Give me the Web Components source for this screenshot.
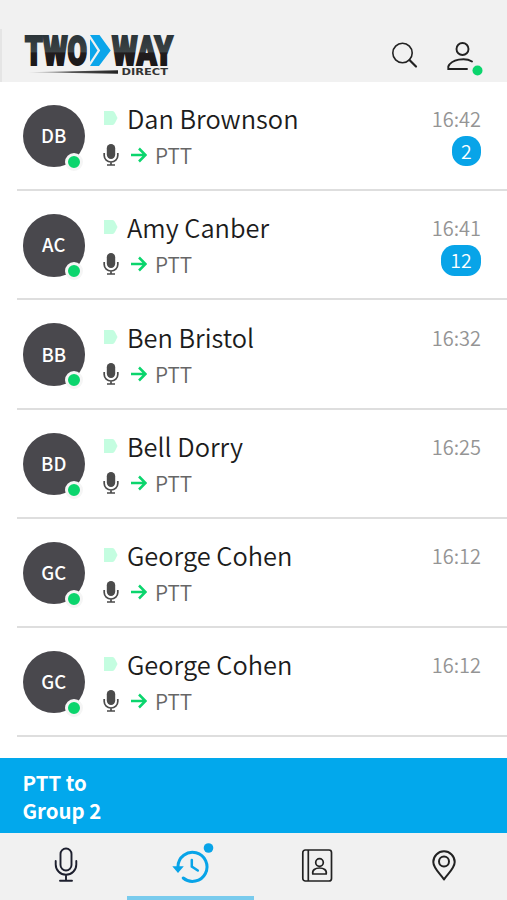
<!DOCTYPE html>
<html lang="en">
<head>
<meta charset="utf-8">
<title>Two Way Direct</title>
<style>
  body {
    margin: 0;
    background: #fff;
    font-family: "Noto Sans CJK SC", "Noto Sans", sans-serif;
  }
</style>
</head>
<body>
<ptt-app>
  <app-header slot="header"></app-header>
  <contact-row initials="DB" time="16:42" unread="2">Dan Brownson</contact-row>
  <contact-row initials="AC" time="16:41" unread="12">Amy Canber</contact-row>
  <contact-row initials="BB" time="16:32">Ben Bristol</contact-row>
  <contact-row initials="BD" time="16:25">Bell Dorry</contact-row>
  <contact-row initials="GC" time="16:12">George Cohen</contact-row>
  <contact-row initials="GC" time="16:12">George Cohen</contact-row>
  <ptt-bar slot="footer">PTT to<br>Group 2</ptt-bar>
  <tab-bar slot="footer">
    <tab-item>
      <svg width="24" height="36" viewBox="-3 -1.5 24 36" fill="none" stroke="#1d1f2e" stroke-width="1.9" stroke-linecap="round">
        <rect x="6.5" y="1" width="11" height="22" rx="5.5"/>
        <path d="M1.7 13.5v3.5a10.3 10.3 0 0 0 20.6 0V13.5M12 27.500v5.500M6 33.300h12"/>
      </svg>
    </tab-item>
    <tab-item active>
      <svg width="42" height="40" viewBox="-3.5 -2.5 42 40" fill="none" stroke="#08a4e8" stroke-width="3">
        <path d="M5.500 22V20a14.500 14.500 0 1 1 5.200 11.500" stroke-linecap="round"/>
        <path d="M-.2 19.800h11.500L5.500 26.500z" fill="#08a4e8" stroke="none"/>
        <path d="M19.300 13.500v6.500l6 4" stroke-linecap="round" stroke-width="2.500"/>
        <circle cx="36" cy="1.500" r="4.800" fill="#08a4e8" stroke="none"/>
      </svg>
    </tab-item>
    <tab-item>
      <svg width="31" height="34" viewBox="-.5 -2 31 34" fill="none" stroke="#222" stroke-width="1.700">
        <rect x="1.300" y="1" width="28.700" height="31" rx="2.500"/>
        <path d="M6.800 1v31"/>
        <circle cx="18" cy="13.500" r="3.800"/>
        <path d="M11.300 25c-.8-4 2.500-6 6.700-6s7.500 2 6.700 6z" stroke-linejoin="round"/>
      </svg>
    </tab-item>
    <tab-item>
      <svg width="24" height="32" viewBox="0 -2 24 32" fill="none" stroke="#222" stroke-width="2">
        <path d="M12 29.500C9 24.500 1.300 18.500 1.300 12a10.700 10.700 0 0 1 21.400 0C22.700 18.500 15 24.500 12 29.500z" stroke-linejoin="round"/>
        <circle cx="12" cy="11.500" r="5"/>
      </svg>
    </tab-item>
  </tab-bar>
</ptt-app>

<template id="app-template">
  <style>
    :host {
      display: flex;
      flex-direction: column;
      height: 900px;
      overflow: hidden;
    }
    main {
      flex: 1;
      min-height: 0;
    }
  </style>
  <slot name="header"></slot>
  <main><slot></slot></main>
  <slot name="footer"></slot>
</template>

<template id="header-template">
  <style>
    :host {
      display: flex;
      align-items: flex-start;
      justify-content: space-between;
      box-sizing: border-box;
      height: 82px;
      padding: 32px 22px 0 22px;
      background: linear-gradient(#e5e5e5, #e5e5e5) 0 29px / 2px 53px no-repeat #f1f1f1;
    }
    nav {
      display: flex;
      gap: 29px;
      padding-top: 9px;
    }
    svg {
      display: block;
      overflow: visible;
    }
  </style>
  <svg width="156" height="48" viewBox="0 0 156 48">
    <defs>
      <linearGradient id="ink" gradientUnits="userSpaceOnUse" x1="0" y1="3" x2="0" y2="34">
        <stop offset="0" stop-color="#2c3539"/>
        <stop offset=".54" stop-color="#3b4244"/>
        <stop offset=".58" stop-color="#201c1d"/>
        <stop offset="1" stop-color="#1b1819"/>
      </linearGradient>
      <linearGradient id="rule">
        <stop offset="0" stop-color="#777" stop-opacity=".3"/>
        <stop offset=".5" stop-color="#555"/>
        <stop offset="1" stop-color="#222"/>
      </linearGradient>
    </defs>
    <g font-family="Roboto, 'Liberation Sans', sans-serif" font-weight="900" font-size="40" fill="url(#ink)" stroke="url(#ink)" stroke-width="2.200">
      <text x="3" y="32.500" textLength="62" lengthAdjust="spacingAndGlyphs">TWO</text>
      <text x="90" y="32.500" textLength="61" lengthAdjust="spacingAndGlyphs">WAY</text>
    </g>
    <path d="M68 3h9.500l11.200 15.500L77 34h-9l10.200-15.500z" fill="#0ba5ea"/>
    <path d="M68 7l7.500 11.500L68 30z" fill="#0ba5ea"/>
    <path d="M6 40.200l90-1.900v3.500z" fill="url(#rule)"/>
    <text x="99.500" y="43.200" textLength="46.500" lengthAdjust="spacingAndGlyphs" font-family="'DejaVu Sans', sans-serif" font-weight="bold" font-size="9.300" fill="#333">DIRECT</text>
  </svg>
  <nav>
    <svg width="26" height="28" viewBox="0 0 26 28" fill="none" stroke="#222">
      <circle cx="10.500" cy="12" r="9.700" stroke-width="1.600"/>
      <path d="M17.500 19l6.500 6.500" stroke-width="2.200" stroke-linecap="round"/>
    </svg>
    <svg width="38" height="36" viewBox="0 0 38 36" fill="none" stroke="#222" stroke-width="1.900" stroke-linecap="round">
      <circle cx="15.500" cy="8" r="6"/>
      <path d="M25 20.500C18 16 4.500 18.500 1.300 25.500V28H20"/>
      <circle cx="30.500" cy="29.500" r="5" fill="#0bd56d" stroke="none"/>
    </svg>
  </nav>
</template>

<template id="row-template">
  <style>
    :host {
      display: flex;
      box-sizing: border-box;
      height: 109.200px;
      margin-left: 17px;
      padding: 18.200px 26px 0 5.500px;
      border-bottom: 2px solid #dedede;
    }
    .avatar {
      position: relative;
      display: flex;
      align-items: center;
      justify-content: center;
      width: 62.500px;
      height: 62.500px;
      margin: 4.800px 18px 0 0;
      border-radius: 50%;
      background: #49484d;
      color: #fff;
      font-size: 18.500px;
      font-weight: 500;
      line-height: 26px;
    }
    .initials {
      margin-bottom: 2px;
    }
    .status {
      position: absolute;
      right: 2px;
      bottom: -3.500px;
      width: 12px;
      height: 12px;
      border: 3.500px solid #f5f5f5;
      border-radius: 50%;
      background: #0bd56d;
    }
    .info {
      flex: 1;
    }
    .name,
    .call {
      display: flex;
      align-items: center;
    }
    .name {
      gap: 9px;
      height: 36px;
      margin-bottom: 4px;
      color: #1c1c1c;
      font-size: 25.400px;
      font-weight: 350;
      line-height: 36px;
    }
    .call {
      height: 30px;
      color: #666;
      font-size: 20.800px;
      font-weight: 350;
      line-height: 30px;
    }
    .arrow {
      margin: 0 8px 0 12px;
    }
    .meta {
      display: flex;
      flex-direction: column;
      align-items: flex-end;
      gap: 2.800px;
      padding-top: 5px;
      color: #949494;
      font-size: 20px;
      font-weight: 350;
      line-height: 28px;
    }
    .badge {
      box-sizing: border-box;
      height: 30.500px;
      padding: 0 9.300px;
      border-radius: 13.500px;
      background: #08a4e8;
      color: #fff;
      font-size: 19.500px;
      line-height: 30px;
    }
    .badge:empty {
      display: none;
    }
    svg {
      flex: none;
    }
  </style>
  <div class="avatar"><span class="initials"></span><span class="status"></span></div>
  <div class="info">
    <div class="name">
      <svg width="15" height="14" viewBox="0 0 15 14"><path d="M1 0h8.500Q11 0 12 2l2.500 5L12 12q-1 2-2.500 2H1z" fill="#c4fde0"/></svg>
      <slot></slot>
    </div>
    <div class="call">
      <svg width="16" height="24" viewBox="0 0 16 24">
        <rect x="3.800" y="1" width="8.400" height="15" rx="4.200" fill="#4b4b4b"/>
        <path d="M1.200 10v2.500a6.800 6.500 0 0 0 13.600 0V10M8 19v3M4 22h8" fill="none" stroke="#4b4b4b" stroke-width="1.700"/>
      </svg>
      <svg class="arrow" width="16" height="16" viewBox="0 0 16 16" fill="none" stroke="#0bd56d" stroke-width="2.500"><path d="M0 8h14M8 1.500L14.500 8 8 14.500"/></svg>
      <span>PTT</span>
    </div>
  </div>
  <div class="meta"><span class="time"></span><span class="badge"></span></div>
</template>

<template id="bar-template">
  <style>
    :host {
      display: block;
      box-sizing: border-box;
      height: 74.500px;
      padding: 11px 22.500px 0;
      background: #02a8ec;
      color: #fff;
      font-size: 20.400px;
      font-weight: 700;
      line-height: 27.500px;
    }
  </style>
  <slot></slot>
</template>

<template id="tabs-template">
  <style>
    :host {
      display: grid;
      grid-template-columns: repeat(4, 1fr);
      height: 67.500px;
      background: #f1f1f1;
    }
  </style>
  <slot></slot>
</template>

<template id="tab-template">
  <style>
    :host {
      display: flex;
      justify-content: center;
      align-items: center;
      box-sizing: border-box;
      border-bottom: 4px solid transparent;
    }
    :host([active]) {
      border-bottom-color: #79cbed;
    }
    ::slotted(svg) {
      display: block;
      overflow: visible;
    }
  </style>
  <slot></slot>
</template>

<script>
class BaseElement extends HTMLElement {
  constructor(templateId) {
    super();

    this.attachShadow({ mode: 'open' });
    this.shadowRoot.appendChild(document.getElementById(templateId).content.cloneNode(true));
  }
}

class PttApp extends BaseElement {
  constructor() {
    super('app-template');
  }
}

class AppHeader extends BaseElement {
  constructor() {
    super('header-template');
  }
}

class ContactRow extends BaseElement {
  constructor() {
    super('row-template');
  }

  connectedCallback() {
    this.shadowRoot.querySelector('.initials').textContent = this.getAttribute('initials');
    this.shadowRoot.querySelector('.time').textContent = this.getAttribute('time');
    this.shadowRoot.querySelector('.badge').textContent = this.getAttribute('unread') || '';
  }
}

class PttBar extends BaseElement {
  constructor() {
    super('bar-template');
  }
}

class TabBar extends BaseElement {
  constructor() {
    super('tabs-template');
  }
}

class TabItem extends BaseElement {
  constructor() {
    super('tab-template');
  }
}

window.customElements.define('ptt-app', PttApp);
window.customElements.define('app-header', AppHeader);
window.customElements.define('contact-row', ContactRow);
window.customElements.define('ptt-bar', PttBar);
window.customElements.define('tab-bar', TabBar);
window.customElements.define('tab-item', TabItem);
</script>
</body>
</html>
